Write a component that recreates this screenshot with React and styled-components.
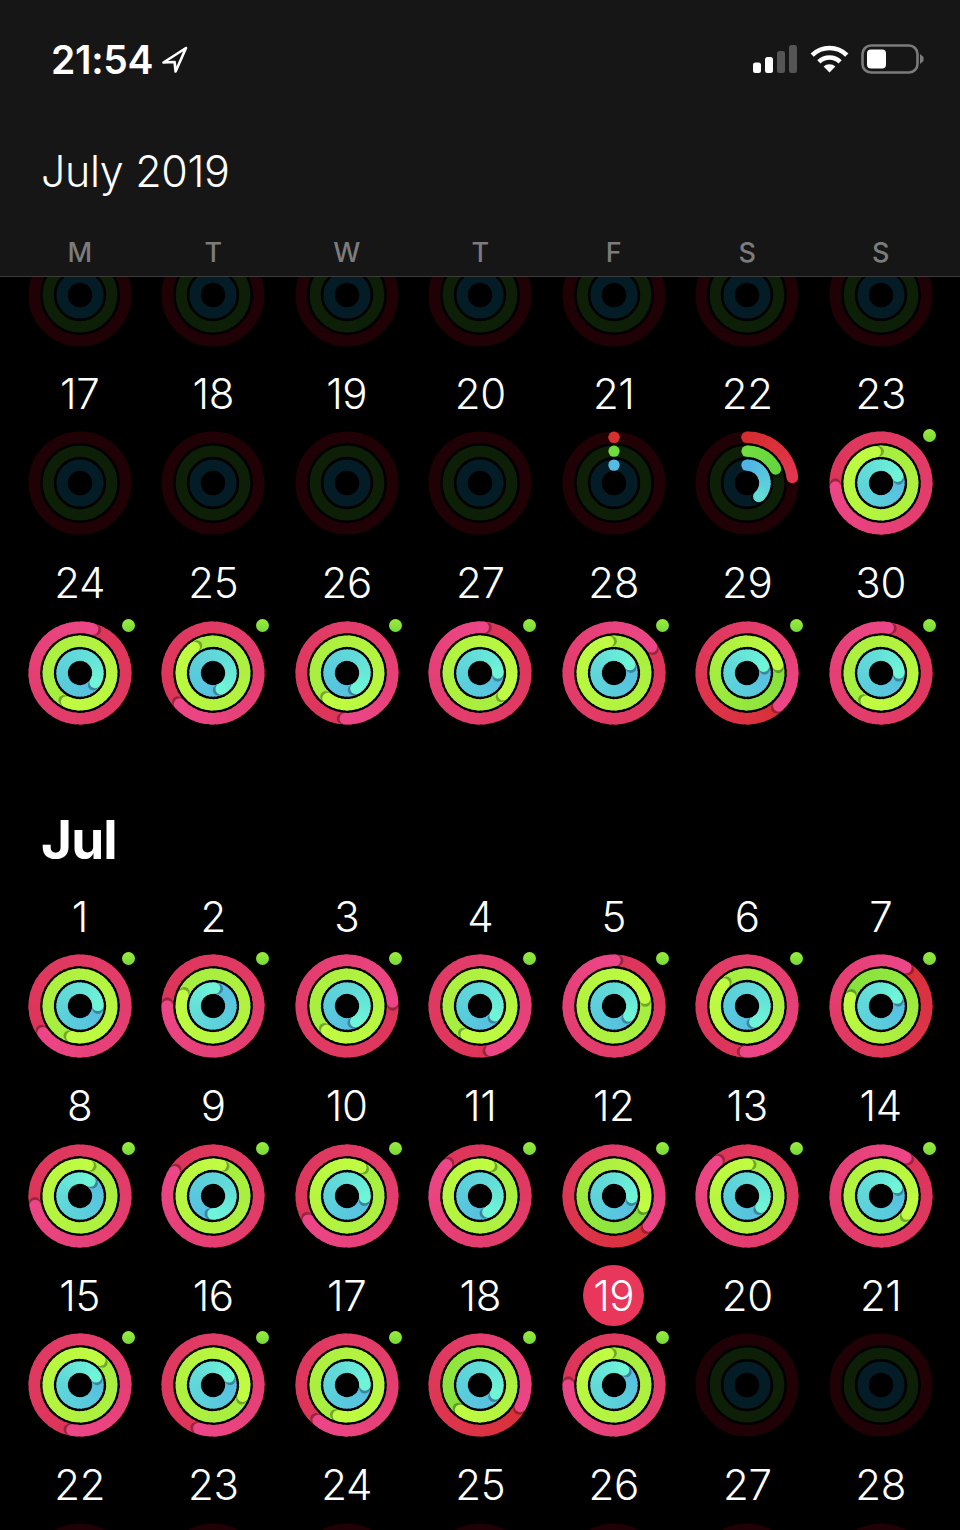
import React from "react";
import styled, { createGlobalStyle } from "styled-components";

const Global = createGlobalStyle`
  html, body { margin: 0; padding: 0; background: #000; width: 960px; height: 1530px; overflow: hidden; }
  #root { width: 960px; height: 1530px; overflow: hidden; }
`;

const Page = styled.div`
  width: 960px;
  height: 1530px;
  overflow: hidden;
  background: #000;
  color: #fff;
  font-family: Inter, "Liberation Sans", sans-serif;
`;
const Header = styled.header`
  position: relative;
  z-index: 2;
  height: 276px;
  background: #161616;
  border-bottom: 1px solid #3c3c3c;
  display: flex;
  flex-direction: column;
`;
const StatusBar = styled.div`
  display: flex;
  justify-content: space-between;
  align-items: center;
  height: 38px;
  padding: 40px 36px 0 51px;
`;
const ClockGroup = styled.div`
  display: flex;
  align-items: center;
  gap: 8px;
`;
const Clock = styled.span`
  margin-top: 2px;
  font-size: 39px;
  font-weight: 600;
  line-height: 38px;
  letter-spacing: -0.3px;
`;
const StatusIcons = styled.div`
  display: flex;
  align-items: center;
  gap: 12px;
`;
const Title = styled.h1`
  margin: 68px 0 0 41px;
  height: 50px;
  font-size: 43px;
  line-height: 50px;
  font-weight: 350;
  letter-spacing: -0.35px;
`;
const Weekdays = styled.div`
  display: grid;
  grid-template-columns: repeat(7, 1fr);
  padding: 0 12.5px 0 13px;
  margin-top: 42px;
`;
const Weekday = styled.span`
  text-align: center;
  font-size: 27px;
  line-height: 30px;
  font-weight: 500;
  color: #7c7c7c;
`;
const Calendar = styled.main`
  margin-top: -34px;
`;
const Week = styled.section`
  display: grid;
  grid-template-columns: repeat(7, 1fr);
  padding: 0 12.5px 0 13px;
  height: ${(p) => (p.$clipped ? "127px" : "189.5px")};
`;
const Day = styled.div`
  display: flex;
  flex-direction: column;
  align-items: center;
`;
const DayLabel = styled.div`
  height: 46px;
  margin-bottom: 15px;
  display: flex;
  align-items: center;
  justify-content: center;
  font-size: 42px;
  font-weight: 350;
  letter-spacing: -0.3px;
`;
const TodayMark = styled.span`
  flex: none;
  width: 61px;
  height: 61px;
  margin-top: 1px;
  border-radius: 50%;
  background: #e8375b;
  display: flex;
  align-items: center;
  justify-content: center;
`;
const RingBox = styled.div`
  position: relative;
  width: 104px;
  height: 104px;
`;
const RingSvg = styled.svg`
  display: block;
  width: 104px;
  height: 104px;
`;
const MoveDot = styled.span`
  position: absolute;
  left: 94.5px;
  top: -2px;
  width: 13px;
  height: 13px;
  border-radius: 50%;
  background: linear-gradient(180deg, #9aec3d, #78da39);
`;
const MonthHeading = styled.h2`
  margin: 0;
  height: 144px;
  padding: 62px 0 0 41px;
  box-sizing: border-box;
  font-size: 53px;
  line-height: 58px;
  font-weight: 700;
  letter-spacing: -0.8px;
`;

const hex = (c) => [1, 3, 5].map((i) => parseInt(c.slice(i, i + 2), 16));
const mix = (stops, t) => {
  const n = stops.length - 1;
  const i = Math.min(n - 1, Math.floor(t * n));
  const f = t * n - i;
  const a = hex(stops[i]);
  const b = hex(stops[i + 1]);
  return `rgb(${a.map((v, k) => Math.round(v + (b[k] - v) * f)).join(",")})`;
};
const pt = (r, deg) => {
  const a = ((deg - 90) * Math.PI) / 180;
  return [52 + r * Math.cos(a), 52 + r * Math.sin(a)];
};
const arc = (r, a, b) => {
  const [x1, y1] = pt(r, a);
  const [x2, y2] = pt(r, b);
  return `M${x1.toFixed(2)} ${y1.toFixed(2)}A${r} ${r} 0 0 1 ${x2.toFixed(2)} ${y2.toFixed(2)}`;
};

const TRACKS = [
  {
    r: 45.7, w: 11.6, dim: "#200105",
    full: ["#dd3458", "#e03a62", "#e43e72", "#ec4688"],
    hot: ["#d83038", "#dd3550", "#e33c6c", "#ec4688"],
    part: ["#d52c2e", "#e2364f"], dot: "#d8302f",
  },
  {
    r: 31.8, w: 11.2, dim: "#0d1f06",
    full: ["#a4ee40", "#aef040", "#b6f640", "#c0fc41"],
    hot: ["#86e03c", "#94e83e", "#aef040", "#c0fc41"],
    part: ["#70de3e", "#66d53e"], dot: "#70dc3c",
  },
  {
    r: 17.9, w: 11.4, dim: "#041c26",
    full: ["#56bde1", "#5accdc", "#62dcd8", "#6ef5d8"],
    hot: ["#56bde1", "#5accdc", "#62dcd8", "#6ef5d8"],
    part: ["#4fb4e6", "#62dcd4"], dot: "#55bae4",
  },
];

function Sweep({ track, start, sweep, stops }) {
  const n = Math.max(2, Math.round(sweep / 8));
  const step = sweep / n;
  const segs = [];
  for (let i = 0; i < n; i++) {
    const a = start + i * step;
    const end = i < n - 1 ? a + step + 5 : a + step;
    segs.push(
      <path key={i} d={arc(track.r, a, end)} fill="none" stroke={mix(stops, (i + 0.5) / n)} strokeWidth={track.w} />
    );
  }
  const tip = start + sweep;
  const [cx, cy] = pt(track.r, tip);
  const [sx, sy] = pt(track.r, tip + 180 / track.r);
  const [bx, by] = pt(track.r, start);
  return (
    <g>
      {sweep < 360 && <circle cx={bx} cy={by} r={track.w / 2} fill={stops[0]} />}
      {segs}
      <circle cx={sx} cy={sy} r={track.w / 2 - 0.3} fill="#000" opacity="0.3" filter="url(#tipShade)" />
      <circle cx={cx} cy={cy} r={track.w / 2} fill={stops[stops.length - 1]} />
    </g>
  );
}

function Ring({ kind = "idle", tips, hot }) {
  return (
    <RingBox>
      <RingSvg viewBox="0 0 104 104">
        <defs>
          <filter id="tipShade" x="-50%" y="-50%" width="200%" height="200%">
            <feGaussianBlur stdDeviation="0.7" />
          </filter>
        </defs>
        {TRACKS.map((t, i) => {
          if (kind === "full") {
            return <Sweep key={i} track={t} start={tips[i]} sweep={360} stops={hot ? t.hot : t.full} />;
          }
          return (
            <g key={i}>
              <circle cx="52" cy="52" r={t.r} fill="none" stroke={t.dim} strokeWidth={t.w} />
              {kind === "dots" && <circle cx="52" cy={52 - t.r} r={t.w / 2} fill={t.dot} />}
              {kind === "partial" && <Sweep track={t} start={0} sweep={tips[i]} stops={t.part} />}
            </g>
          );
        })}
      </RingSvg>
      {kind === "full" && <MoveDot />}
    </RingBox>
  );
}

const f = (d, a, b, c, opts = {}) => ({ d, kind: "full", tips: [a, b, c], ...opts });
const idle = (d) => ({ d, kind: "idle" });
const HOT = { hot: true };

const JUNE_TOP = [1, 2, 3, 4, 5, 6, 7].map(() => idle(null));
const JUNE = [
  [idle(17), idle(18), idle(19), idle(20), { d: 21, kind: "dots" }, { d: 22, kind: "partial", tips: [83, 64, 139] }, f(23, 265, 350, 68)],
  [f(24, 16, 205, 122), f(25, 227, 324, 153), f(26, 182, 217, 150), f(27, 4, 133, 90), f(28, 55, 350, 62), f(29, 136, 75, 68, HOT), f(30, 9, 208, 90)],
];
const JULY = [
  [f(1, 234, 195, 88), f(2, 270, 290, 5), f(3, 85, 220, 151), f(4, 166, 206, 123), f(5, 1, 76, 124), f(6, 182, 314, 154), f(7, 33, 286, 64, HOT)],
  [f(8, 258, 15, 34), f(9, 302, 15, 180), f(10, 238, 26, 95), f(11, 313, 17, 154), f(12, 131, 110, 95, HOT), f(13, 319, 2, 129), f(14, 33, 125, 62)],
  [f(15, 190, 39, 63), f(16, 198, 111, 63), f(17, 219, 196, 90), f(18, 118, 218, 120, HOT), f(19, 270, 350, 33, { today: true }), idle(20), idle(21)],
  [idle(22), idle(23), idle(24), idle(25), idle(26), idle(27), idle(28)],
];

function WeekRow({ days, clipped }) {
  return (
    <Week $clipped={clipped}>
      {days.map((day, i) => (
        <Day key={i}>
          {day.d !== null && (
            <DayLabel>{day.today ? <TodayMark>{day.d}</TodayMark> : day.d}</DayLabel>
          )}
          <Ring kind={day.kind} tips={day.tips} hot={day.hot} />
        </Day>
      ))}
    </Week>
  );
}

const LocationArrow = () => (
  <svg width="27" height="27" viewBox="0 0 27 27" fill="none">
    <path d="M25 2 L2.5 16.5 L13.6 16 L14.6 25.5 Z" stroke="#fff" strokeWidth="2.6" strokeLinejoin="round" />
  </svg>
);
const SignalBars = () => (
  <svg width="45" height="29" viewBox="0 0 45 29">
    <rect x="0" y="17.5" width="8" height="10.5" rx="2.5" fill="#fff" />
    <rect x="12" y="12" width="8" height="16" rx="2.5" fill="#fff" />
    <rect x="24" y="6" width="8" height="22" rx="2.5" fill="#555" />
    <rect x="36" y="0" width="8" height="28" rx="2.5" fill="#555" />
  </svg>
);
const Wifi = () => (
  <svg width="39" height="28" viewBox="0 0 39 28" fill="none">
    <path d="M2.2 10.2 A24.5 24.5 0 0 1 36.8 10.2" stroke="#fff" strokeWidth="4.6" />
    <path d="M8.9 16.9 A15 15 0 0 1 30.1 16.9" stroke="#fff" strokeWidth="4.6" />
    <path d="M19.5 27.5 L13.6 21.6 A8.3 8.3 0 0 1 25.4 21.6 Z" fill="#fff" />
  </svg>
);
const Battery = () => (
  <svg width="63" height="30" viewBox="0 0 63 30">
    <rect x="1.5" y="1.5" width="55" height="27" rx="8.5" fill="none" stroke="#7b7b7b" strokeWidth="2.6" />
    <rect x="6" y="5.5" width="19" height="19" rx="4" fill="#fff" />
    <path d="M59 10 L62.5 13 L62.5 17 L59 20 Z" fill="#7b7b7b" />
  </svg>
);

export default function App() {
  return (
    <Page>
      <Global />
      <Header>
        <StatusBar>
          <ClockGroup>
            <Clock>21:54</Clock>
            <LocationArrow />
          </ClockGroup>
          <StatusIcons>
            <SignalBars />
            <Wifi />
            <Battery />
          </StatusIcons>
        </StatusBar>
        <Title>July 2019</Title>
        <Weekdays>
          {["M", "T", "W", "T", "F", "S", "S"].map((d, i) => (
            <Weekday key={i}>{d}</Weekday>
          ))}
        </Weekdays>
      </Header>
      <Calendar>
        <WeekRow days={JUNE_TOP} clipped />
        {JUNE.map((w, i) => (
          <WeekRow key={i} days={w} />
        ))}
        <MonthHeading>Jul</MonthHeading>
        {JULY.map((w, i) => (
          <WeekRow key={i} days={w} />
        ))}
      </Calendar>
    </Page>
  );
}
